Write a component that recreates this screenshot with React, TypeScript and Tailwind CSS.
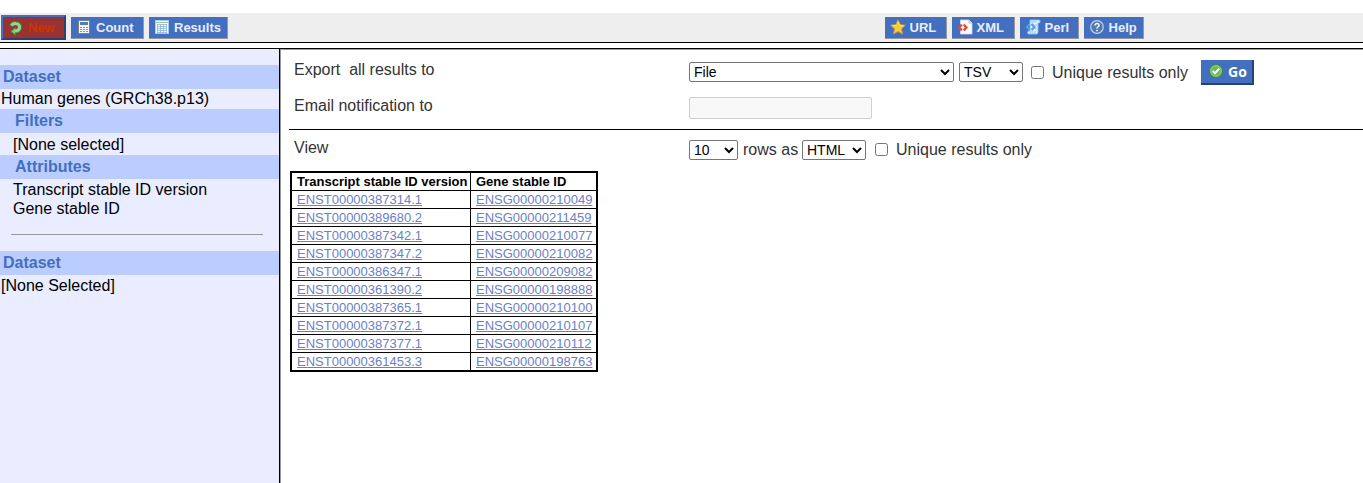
import React from "react";

const rows: [string, string][] = [
  ["ENST00000387314.1", "ENSG00000210049"],
  ["ENST00000389680.2", "ENSG00000211459"],
  ["ENST00000387342.1", "ENSG00000210077"],
  ["ENST00000387347.2", "ENSG00000210082"],
  ["ENST00000386347.1", "ENSG00000209082"],
  ["ENST00000361390.2", "ENSG00000198888"],
  ["ENST00000387365.1", "ENSG00000210100"],
  ["ENST00000387372.1", "ENSG00000210107"],
  ["ENST00000387377.1", "ENSG00000210112"],
  ["ENST00000361453.3", "ENSG00000198763"],
];

function Icon({ children }: { children: React.ReactNode }) {
  return (
    <svg className="size-4 shrink-0" viewBox="0 0 16 16" fill="none" aria-hidden="true">
      {children}
    </svg>
  );
}

const RefreshIcon = () => (
  <Icon>
    <path d="M3.500 6C4.200 4 6 3.200 8 3.500c2.700.3 4 2 3.700 4.200-.3 2.200-2 3.300-4.700 3.300" stroke="#3c8a3a" strokeWidth="4.600" />
    <path d="M7.500 7.500v7.700L2.800 11.400Z" fill="#7fcb76" stroke="#3c8a3a" />
    <path d="M3.600 5.700C4.300 4.100 6 3.300 8 3.600c2.600.3 3.900 2 3.600 4.100-.3 2.200-2 3.200-4.600 3.200" stroke="#95d68c" strokeWidth="2.900" />
  </Icon>
);

const CalculatorIcon = () => (
  <Icon>
    <rect x="2.500" y="1.500" width="11" height="13" rx="1" fill="#f5f5f2" stroke="#857f78" />
    <rect x="4" y="3" width="8" height="3" fill="#527fb8" />
    <path d="M4 8.500h2M7 8.500h2M4 10.500h2M7 10.500h2M4 12.500h2M7 12.500h2M10 10.500h2M10 12.500h2" stroke="#99958e" />
    <path d="M10 8.500h2" stroke="#d08070" />
  </Icon>
);

const TableIcon = () => (
  <Icon>
    <rect x="1.500" y="1.500" width="13" height="13" fill="#fff" stroke="#a9c8e8" />
    <path d="M2 3.500h12" stroke="#9cc78f" />
    <path d="M3 5.500h10M3 7.500h10M3 9.500h10M3 11.500h10M3 13.500h10M3.500 5v9M6.500 5v9M9.500 5v9M12.500 5v9" stroke="#8fb3dc" strokeWidth=".8" />
  </Icon>
);

const StarIcon = () => (
  <Icon>
    <path d="m8 .8 2.200 4.800 5.300.6-4 3.600 1.100 5.300L8 12.500l-4.600 2.600 1.100-5.300-4-3.600 5.300-.6Z" fill="#f7cb39" stroke="#c99a2a" strokeWidth=".8" strokeLinejoin="round" />
    <path d="m8 2.500 1.600 3.900 3.800.5M6.400 6.400l-3.800.5" stroke="#ffe070" />
  </Icon>
);

const XmlIcon = () => (
  <Icon>
    <path d="M3.500 1h8.500l3 3v11H3.500Z" fill="#fcfcfc" stroke="#d5d8de" strokeWidth=".8" />
    <path d="M12 1v3h3" fill="#dfe2e7" stroke="#b4b8c0" strokeWidth=".8" />
    <path d="M4.900 5.600 2 8.500l2.900 2.900M6.600 5.600l2.900 2.900-2.900 2.900" stroke="#e5453c" strokeWidth="2.200" />
  </Icon>
);

const ScriptIcon = () => (
  <Icon>
    <path d="M5 1h9c1.500 0 1.500 3 0 3h-1v8c0 3-1 3-2 3H4c-2 0-2-3 0-3h1Z" fill="#e3f2fe" stroke="#80bde9" />
    <path d="M6 3h6M10 6h2M10 10h2M4 13h7" stroke="#8dc6ec" />
    <path d="M4.700 5.100 1.800 8l2.900 2.900M6.600 5.100 9.500 8l-2.900 2.900" stroke="#3b93d8" strokeWidth="2.200" />
    <path d="M4.700 5.100 1.800 8l2.900 2.900M6.600 5.100 9.500 8l-2.900 2.900" stroke="#78bff2" strokeWidth=".8" />
  </Icon>
);

const HelpIcon = () => (
  <Icon>
    <circle cx="8" cy="8" r="6.300" fill="#5279b4" stroke="#c0d0e8" strokeWidth="1.200" />
    <path d="M6 6.500C6 3.700 10.300 4 10 6.500 9.900 7.700 8 8 8 9.500M8 10.700v1.500" stroke="#fff" strokeWidth="1.500" />
  </Icon>
);

const AcceptIcon = () => (
  <Icon>
    <circle cx="8" cy="8" r="6.500" fill="#6dbb5d" stroke="#398c31" />
    <circle cx="8" cy="8" r="5.300" stroke="#a1d597" strokeWidth=".7" />
    <path d="m4.700 8 2.300 2.300 4.200-4.600" stroke="#fff" strokeWidth="2" />
  </Icon>
);

function ToolButton({ icon, width, children }: { icon: React.ReactNode; width: string; children: React.ReactNode }) {
  return (
    <button className={"flex h-[22px] items-center gap-1 border-r border-b border-[#999] bg-[#426fc0] pl-[5px] text-[13px] font-bold text-[#eaedff] " + width}>
      {icon}
      <span>{children}</span>
    </button>
  );
}

const selectClass = "h-5 rounded-[2px] border border-[#767676] bg-white text-[14px] text-black";

function Heading({ children, inset }: { children: React.ReactNode; inset?: boolean }) {
  return (
    <h2 className={"h-6 bg-[#bbccff] text-[16px] leading-[23px] font-bold text-[#426fc0] " + (inset ? "pl-[15px]" : "pl-[3px]")}>
      {children}
    </h2>
  );
}

export default function App() {
  return (
    <div className="flex min-h-screen flex-col bg-white pt-[13px] font-['Liberation_Sans',Arial,sans-serif] text-[16px] leading-[19px] text-[#333]">
      <header className="flex h-[30px] items-center border-b border-black bg-[#eee]">
        <div className="flex w-[64.9%] items-center gap-[5px] pl-px">
          <button className="flex h-[25px] w-[65px] items-center gap-1 border-2 border-t-[#426fc0] border-r-[#2a4272] border-b-[#2a4272] border-l-[#426fc0] bg-[#993333] pl-[5px] text-[13px] font-bold text-[#cc3300]">
            <RefreshIcon />
            <span>New</span>
          </button>
          <ToolButton icon={<CalculatorIcon />} width="w-[73px]">Count</ToolButton>
          <ToolButton icon={<TableIcon />} width="w-[79px]">Results</ToolButton>
        </div>
        <div className="flex items-center gap-[5px]">
          <ToolButton icon={<StarIcon />} width="w-[62px]">URL</ToolButton>
          <ToolButton icon={<XmlIcon />} width="w-[63px]">XML</ToolButton>
          <ToolButton icon={<ScriptIcon />} width="w-[59px]">Perl</ToolButton>
          <ToolButton icon={<HelpIcon />} width="w-[60px]">Help</ToolButton>
        </div>
      </header>

      <div className="mt-[5px] flex grow border-t border-black">
        <aside className="w-[280px] shrink-0 border-r border-black bg-[#eaedff] pt-4 text-black">
          <Heading>Dataset</Heading>
          <p className="h-5 pl-px">Human genes (GRCh38.p13)</p>
          <Heading inset>Filters</Heading>
          <p className="h-[22px] pt-[2px] pl-[13px]">[None selected]</p>
          <Heading inset>Attributes</Heading>
          <ul className="pt-px pl-[13px]">
            <li>Transcript stable ID version</li>
            <li>Gene stable ID</li>
          </ul>
          <hr className="mt-4 mr-4 mb-4 ml-[11px] border-[#999]" />
          <Heading>Dataset</Heading>
          <p className="pt-px pl-px">[None Selected]</p>
        </aside>

        <main className="min-w-0 grow border-t border-l border-[#999] pl-2">
          <form className="border-b border-black pb-[10px] pl-[5px]" onSubmit={(e) => e.preventDefault()}>
            <div className="flex h-11 items-center">
              <label htmlFor="export" className="w-[395px] shrink-0 pb-[6px] whitespace-pre">Export  all results to</label>
              <select id="export" className={selectClass + " w-[265px]"}>
                <option>File</option>
              </select>
              <select aria-label="Export format" className={selectClass + " ml-[5px] w-[64px]"}>
                <option>TSV</option>
              </select>
              <label className="flex items-center pl-2 whitespace-nowrap">
                <input type="checkbox" className="mr-2 size-[13px]" />
                Unique results only
              </label>
              <button className="ml-[13px] flex h-[25px] w-[53px] items-center gap-1 border-r-2 border-b-2 border-[#2a4272] bg-[#426fc0] pl-[7px] font-['Open_Sans',sans-serif] text-[14px] font-bold text-white">
                <AcceptIcon />
                <span>Go</span>
              </button>
            </div>
            <div className="flex items-start pt-[2px]">
              <label htmlFor="email" className="w-[395px] shrink-0">Email notification to</label>
              <input id="email" type="text" disabled className="mt-px h-[22px] w-[183px] rounded-[2px] border border-[#d0d0d0] bg-[#f8f8f8] px-1 text-[14px]" />
            </div>
          </form>

          <div className="flex h-[41px] items-center pb-[2px] pl-[5px]">
            <label htmlFor="count" className="w-[395px] shrink-0 pb-1">View</label>
            <select id="count" className={selectClass + " w-[49px]"}>
              <option>10</option>
            </select>
            <label htmlFor="format" className="w-[64px] pl-[5px] whitespace-nowrap">rows as</label>
            <select id="format" className={selectClass + " w-[64px]"}>
              <option>HTML</option>
            </select>
            <label className="flex items-center pl-[9px] whitespace-nowrap">
              <input type="checkbox" className="mr-2 size-[13px]" />
              Unique results only
            </label>
          </div>

          <table className="ml-px table-fixed border-separate border-spacing-0 border-2 border-black text-[13px] leading-[17px]">
            <thead>
              <tr className="text-left text-black">
                <th className="w-[179px] border-r border-b border-black pl-[5px] whitespace-nowrap">Transcript stable ID version</th>
                <th className="w-[125px] border-b border-black pl-[5px]">Gene stable ID</th>
              </tr>
            </thead>
            <tbody className="text-[#6a7fc8]">
              {rows.map(([transcript, gene], i) => {
                const line = i < rows.length - 1 ? "border-b " : "";
                return (
                  <tr key={transcript}>
                    <td className={line + "border-r border-black pl-[5px]"}>
                      <a href={"#" + transcript} className="underline">{transcript}</a>
                    </td>
                    <td className={line + "border-black pl-[5px]"}>
                      <a href={"#" + gene} className="underline">{gene}</a>
                    </td>
                  </tr>
                );
              })}
            </tbody>
          </table>
        </main>
      </div>
    </div>
  );
}
